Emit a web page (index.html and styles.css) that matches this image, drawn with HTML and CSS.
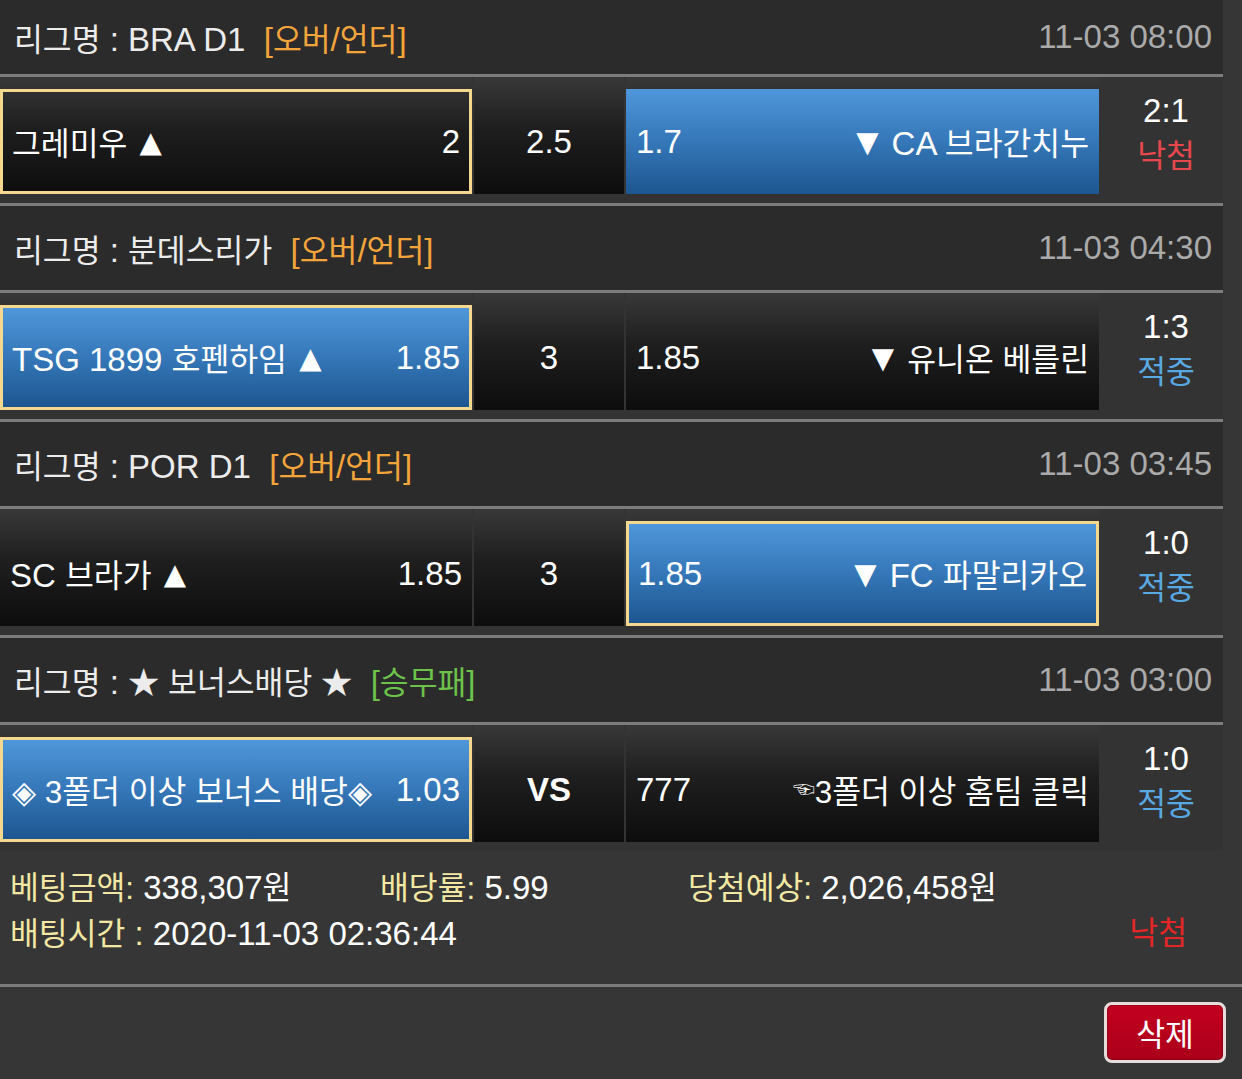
FILE: index.html
```html
<!DOCTYPE html>
<html lang="ko">
<head>
<meta charset="utf-8">
<title>베팅내역</title>
<link rel="stylesheet" href="styles.css">
</head>
<body>
<div class="bet">
  <div class="games">
    <div class="league first">
      <div class="league-name"><span class="ko">리그명</span> : BRA D1&nbsp;&nbsp;<span class="ou">[<span class="ko">오버</span>/<span class="ko">언더</span>]</span></div>
      <div class="time">11-03 08:00</div>
    </div>
    <div class="match">
      <div class="cell"><div class="box sel"><span><span class="ko">그레미우</span> <span class="arr up">▲</span></span><span>2</span></div></div>
      <div class="cell"><div class="box mid">2.5</div></div>
      <div class="cell"><div class="box blue"><span>1.7</span><span><span class="arr down">▼</span> CA <span class="ko">브라간치누</span></span></div></div>
      <div class="score"><span>2:1</span><span class="ko lose">낙첨</span></div>
    </div>

    <div class="league">
      <div class="league-name"><span class="ko">리그명</span> : <span class="ko">분데스리가</span>&nbsp;&nbsp;<span class="ou">[<span class="ko">오버</span>/<span class="ko">언더</span>]</span></div>
      <div class="time">11-03 04:30</div>
    </div>
    <div class="match">
      <div class="cell"><div class="box blue sel"><span>TSG 1899 <span class="ko">호펜하임</span> <span class="arr up">▲</span></span><span>1.85</span></div></div>
      <div class="cell"><div class="box mid">3</div></div>
      <div class="cell"><div class="box"><span>1.85</span><span><span class="arr down">▼</span> <span class="ko">유니온 베를린</span></span></div></div>
      <div class="score"><span>1:3</span><span class="ko win">적중</span></div>
    </div>

    <div class="league">
      <div class="league-name"><span class="ko">리그명</span> : POR D1&nbsp;&nbsp;<span class="ou">[<span class="ko">오버</span>/<span class="ko">언더</span>]</span></div>
      <div class="time">11-03 03:45</div>
    </div>
    <div class="match">
      <div class="cell"><div class="box"><span>SC <span class="ko">브라가</span> <span class="arr up">▲</span></span><span>1.85</span></div></div>
      <div class="cell"><div class="box mid">3</div></div>
      <div class="cell"><div class="box blue sel"><span>1.85</span><span><span class="arr down">▼</span> FC <span class="ko">파말리카오</span></span></div></div>
      <div class="score"><span>1:0</span><span class="ko win">적중</span></div>
    </div>

    <div class="league">
      <div class="league-name"><span class="ko">리그명</span> : <span class="ko">★ 보너스배당 ★</span>&nbsp;&nbsp;<span class="wdl">[<span class="ko">승무패</span>]</span></div>
      <div class="time">11-03 03:00</div>
    </div>
    <div class="match last">
      <div class="cell"><div class="box blue sel"><span class="ko">◈ 3폴더 이상 보너스 배당◈</span><span>1.03</span></div></div>
      <div class="cell"><div class="box mid vs">VS</div></div>
      <div class="cell"><div class="box"><span>777</span><span><span class="hand">☜</span><span class="ko">3폴더 이상 홈팀 클릭</span></span></div></div>
      <div class="score"><span>1:0</span><span class="ko win">적중</span></div>
    </div>
  </div>

  <div class="summary">
    <div class="sum-row">
      <div class="sum-item"><span class="label ko">베팅금액:</span> 338,307<span class="ko">원</span></div>
      <div class="sum-item"><span class="label ko">배당률:</span> 5.99</div>
      <div class="sum-item"><span class="label ko">당첨예상:</span> 2,026,458<span class="ko">원</span></div>
    </div>
    <div class="sum-row2">
      <div class="sum-item"><span class="label"><span class="ko">배팅시간</span> :</span> 2020-11-03 02:36:44</div>
      <div class="result ko">낙첨</div>
    </div>
  </div>

  <div class="actions">
    <button class="del" type="button"><span class="ko">삭제</span></button>
  </div>
</div>
</body>
</html>
```

FILE: styles.css
```css
html, body {
  margin: 0;
  padding: 0;
}

body {
  background: #363636;
  color: #ffffff;
  font-family: "Liberation Sans", "Noto Sans CJK KR", "DejaVu Sans", sans-serif;
  font-size: 33px;
  width: 1242px;
  height: 1079px;
  overflow: hidden;
}

.ko {
  font-size: 0.95em;
}

.arr {
  font-family: "DejaVu Sans", sans-serif;
  font-size: 0.88em;
  vertical-align: 0.12em;
}

.arr.up {
  margin-left: 3px;
}

.arr.down {
  margin-right: 4px;
}

.games {
  width: 1223px;
}

.league {
  height: 84px;
  background: #2b2b2b;
  border-bottom: 3px solid #7c7c7c;
  display: flex;
  align-items: center;
  justify-content: space-between;
  padding: 0 11px 0 14px;
  color: #ececec;
}

.league.first {
  height: 74px;
}

.ou {
  color: #f3a53c;
}

.wdl {
  color: #6cc24a;
}

.time {
  color: #aaaaaa;
}

.match {
  display: grid;
  grid-template-columns: 472px 150px 473px 1fr;
  column-gap: 2px;
  background: #333333;
  padding-bottom: 9px;
  border-bottom: 3px solid #7c7c7c;
}

.match.last {
  border-bottom: none;
}

.cell {
  height: 117px;
  background: linear-gradient(#383838 0%, #1e1e1e 45%, #0d0d0d 100%);
}

.box {
  box-sizing: border-box;
  margin-top: 12px;
  height: 105px;
  display: flex;
  align-items: center;
  justify-content: space-between;
  padding: 0 10px;
  white-space: nowrap;
}

.box.sel {
  border: 3px solid #f5d78d;
  padding: 0 9px;
}

.box.blue {
  background: linear-gradient(#4f97da 0%, #3577b8 50%, #1d5690 100%);
}

.box.mid {
  justify-content: center;
}

.box.vs {
  font-weight: bold;
}

.hand {
  font-family: "Noto Sans CJK KR", sans-serif;
  font-size: 22px;
  position: relative;
  top: -6px;
}

.score {
  display: flex;
  flex-direction: column;
  align-items: center;
  justify-content: center;
  height: 117px;
  line-height: 46px;
  padding: 0 0 4px 8px;
  box-sizing: border-box;
}

.lose {
  color: #e6484d;
}

.win {
  color: #5aa8e2;
}

.summary {
  padding: 14px 55px 27px 10px;
  line-height: 45px;
  border-bottom: 3px solid #7c7c7c;
}

.sum-row {
  display: grid;
  grid-template-columns: 370px 308px 1fr;
}

.sum-row2 {
  display: flex;
  justify-content: space-between;
}

.label {
  color: #f2e8a4;
}

.result {
  color: #e42626;
}

.actions {
  display: flex;
  justify-content: flex-end;
  padding: 15px 16px 0 0;
}

.del {
  width: 122px;
  height: 61px;
  background: linear-gradient(#c2001f, #ab001a);
  border: 3px solid #e6dcdc;
  border-radius: 8px;
  color: #ffffff;
  font-family: "Liberation Sans", "Noto Sans CJK KR", sans-serif;
  font-size: 33px;
  padding: 0;
  box-shadow: inset 0 0 2px rgba(0, 0, 0, 0.6);
}
```
